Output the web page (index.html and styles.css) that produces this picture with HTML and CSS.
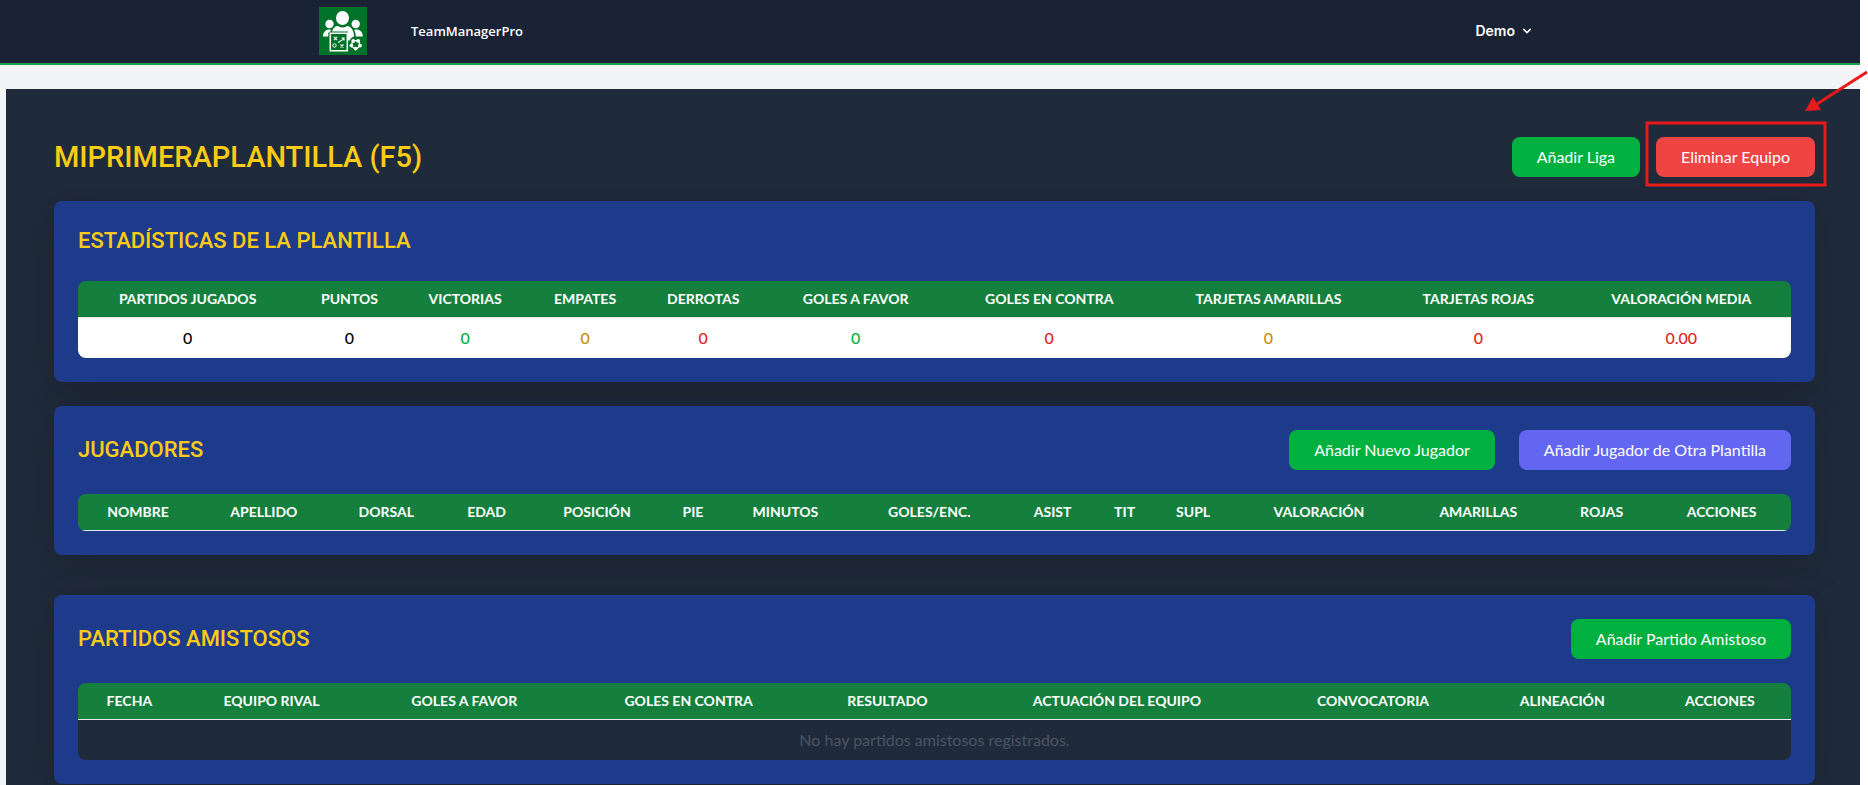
FILE: index.html
```html
<!DOCTYPE html>
<html lang="es">
<head>
<meta charset="utf-8">
<title>TeamManagerPro</title>
<link rel="stylesheet" href="styles.css">
</head>
<body>
<div class="page">
  <header class="nav">
    <div class="nav-inner">
      <a class="logo" href="#" aria-label="Inicio">
        <svg viewBox="0 0 48 48" width="48" height="48" aria-hidden="true">
          <rect width="48" height="48" fill="#007328"/>
          <g fill="#fff">
            <ellipse cx="23.500" cy="11" rx="6.500" ry="7"/>
            <circle cx="10.500" cy="17" r="4.200"/>
            <circle cx="36.700" cy="17" r="4.200"/>
            <path d="M4 29.500c0-4 2.500-7 6-7 1 0 1.700.2 2.300.5l-1.800 2.500H9.300v4z"/>
            <path d="M43.800 29.500c0-4-2.500-7-6-7-1.500 0-2.100.2-2.700.6 1.200 2 1.700 4 1.700 6.400z"/>
            <path d="M13 24.500c1-3.500 3-5.500 6-5.500 3 2 6 2 9 0 4 .3 7 4 7 10.500-2 .6-3.500 2-4.300 4H29V24.500z"/>
          </g>
          <path d="M11.300 26.300h17v17.500h-17z" fill="#007328" stroke="#fff" stroke-width="1.500"/>
          <path d="M15 30l3 3M18 30l-3 3M21.500 37.500l3 3M24.500 37.500l-3 3M19.500 36c0-3 4.500-1 5-5M22.500 31h2.500v2.500" fill="none" stroke="#fff" stroke-width="1.100"/>
          <circle cx="15.500" cy="38.500" r="1.700" fill="none" stroke="#fff"/>
          <circle cx="36.700" cy="37.500" r="3.900" fill="none" stroke="#fff" stroke-width="1.400"/>
          <g fill="#fff">
            <circle cx="34.200" cy="33.900" r="1.900"/>
            <circle cx="39.200" cy="33.900" r="1.900"/>
            <circle cx="41" cy="38.600" r="1.900"/>
            <circle cx="36.700" cy="41.600" r="1.900"/>
            <circle cx="32.400" cy="38.600" r="1.900"/>
          </g>
        </svg>
      </a>
      <a class="brand" href="#">TeamManagerPro</a>
      <button class="user" type="button">Demo
        <svg viewBox="0 0 20 20" width="16" height="16" fill="currentColor" aria-hidden="true"><path fill-rule="evenodd" d="M5.293 7.293a1 1 0 011.414 0L10 10.586l3.293-3.293a1 1 0 111.414 1.414l-4 4a1 1 0 01-1.414 0l-4-4a1 1 0 010-1.414z"/></svg>
      </button>
    </div>
  </header>

  <main class="main">
    <div class="head">
      <h1 class="title">MIPRIMERAPLANTILLA (F5)</h1>
      <div class="actions">
        <button class="btn" type="button">Añadir Liga</button>
        <div class="marked">
          <button class="btn btn-red" type="button">Eliminar Equipo</button>
          <svg class="mark" viewBox="0 0 223 120" width="223" height="120" aria-hidden="true">
            <rect x="2" y="55" width="178" height="62" fill="none" stroke="#e81a1a" stroke-width="3"/>
            <path d="M222 4L172 36" stroke="#e81a1a" stroke-width="3"/>
            <path d="M160 43l8-14 8 13z" fill="#e81a1a"/>
          </svg>
        </div>
      </div>
    </div>

    <section class="card">
      <div class="card-head"><h2 class="subtitle">ESTADÍSTICAS DE LA PLANTILLA</h2></div>
      <div class="frame">
        <table class="table stats">
          <thead><tr><th>PARTIDOS JUGADOS</th><th>PUNTOS</th><th>VICTORIAS</th><th>EMPATES</th><th>DERROTAS</th><th>GOLES A FAVOR</th><th>GOLES EN CONTRA</th><th>TARJETAS AMARILLAS</th><th>TARJETAS ROJAS</th><th>VALORACIÓN MEDIA</th></tr></thead>
          <tbody><tr><td>0</td><td>0</td><td class="good">0</td><td class="warn">0</td><td class="bad">0</td><td class="good">0</td><td class="bad">0</td><td class="warn">0</td><td class="bad">0</td><td class="bad">0.00</td></tr></tbody>
        </table>
      </div>
    </section>

    <section class="card card-spaced">
      <div class="card-head">
        <h2 class="subtitle">JUGADORES</h2>
        <div class="actions actions-wide">
          <button class="btn" type="button">Añadir Nuevo Jugador</button>
          <button class="btn btn-indigo" type="button">Añadir Jugador de Otra Plantilla</button>
        </div>
      </div>
      <div class="frame">
        <table class="table players">
          <thead><tr><th>NOMBRE</th><th>APELLIDO</th><th>DORSAL</th><th>EDAD</th><th>POSICIÓN</th><th>PIE</th><th>MINUTOS</th><th>GOLES/ENC.</th><th>ASIST</th><th>TIT</th><th>SUPL</th><th>VALORACIÓN</th><th>AMARILLAS</th><th>ROJAS</th><th>ACCIONES</th></tr></thead>
        </table>
      </div>
    </section>

    <section class="card">
      <div class="card-head">
        <h2 class="subtitle">PARTIDOS AMISTOSOS</h2>
        <button class="btn" type="button">Añadir Partido Amistoso</button>
      </div>
      <div class="frame">
        <table class="table matches">
          <thead><tr><th>FECHA</th><th>EQUIPO RIVAL</th><th>GOLES A FAVOR</th><th>GOLES EN CONTRA</th><th>RESULTADO</th><th>ACTUACIÓN DEL EQUIPO</th><th>CONVOCATORIA</th><th>ALINEACIÓN</th><th>ACCIONES</th></tr></thead>
          <tbody><tr><td class="empty" colspan="9">No hay partidos amistosos registrados.</td></tr></tbody>
        </table>
      </div>
    </section>
  </main>
</div>
</body>
</html>
```
FILE: styles.css
```css
*, *::before, *::after { box-sizing: border-box; }

body {
  margin: 0;
  background: #fff;
  font-family: Lato, "Liberation Sans", sans-serif;
  font-size: 16px;
  line-height: 24px;
}

h1, h2 { margin: 0; }

.page {
  display: flex;
  flex-direction: column;
  min-height: 100vh;
  margin-right: 8px;
  background: #f3f4f6;
}

.nav {
  background: #1a2236;
  border-bottom: 2px solid #16a34a;
  color: #fff;
}

.nav-inner {
  display: flex;
  align-items: center;
  max-width: 1222px;
  height: 63px;
  margin: 0 auto;
  padding-bottom: 1px;
}

.logo { display: flex; }

.brand {
  margin-left: 44px;
  color: #fff;
  font: 600 13px/20px "Open Sans", sans-serif;
  text-decoration: none;
}

.user {
  display: flex;
  align-items: center;
  gap: 4px;
  margin-left: auto;
  padding: 8px 6px;
  border: 0;
  background: none;
  color: #fff;
  font: 600 14px/20px Inter, sans-serif;
}

.main {
  flex: 1;
  margin: 24px 0 0 6px;
  padding: 48px 45px 0 48px;
  background: #1f2a3a;
}

.head {
  display: flex;
  align-items: center;
  justify-content: space-between;
  margin-bottom: 24px;
}

.title {
  color: #facc15;
  font: 500 29px/40px Roboto, sans-serif;
}

.subtitle {
  color: #facc15;
  font: 500 22px/32px Roboto, sans-serif;
}

.actions {
  display: flex;
  gap: 16px;
}

.actions-wide { gap: 24px; }

.btn {
  padding: 8px 25px;
  border: 0;
  border-radius: 8px;
  background: #00b140;
  color: #fff;
  font: inherit;
}

.btn-red { background: #ef4444; }
.btn-indigo { background: #6366f1; }

.marked { position: relative; }

.mark {
  position: absolute;
  top: -69px;
  right: -53px;
  pointer-events: none;
}

.card {
  margin-bottom: 24px;
  padding: 24px;
  border-radius: 8px;
  background: #1e3a8a;
  box-shadow: 0 8px 40px rgba(0, 0, 0, 0.16);
}

.card-spaced { margin-bottom: 40px; }
.card:last-child { margin-bottom: 1px; }

.card-head {
  display: flex;
  align-items: center;
  justify-content: space-between;
  margin-bottom: 24px;
}

.frame {
  overflow: hidden;
  border-radius: 8px;
}

.table {
  width: 100%;
  border-collapse: separate;
  border-spacing: 0;
  table-layout: fixed;
  text-align: center;
}

.table th {
  padding: 8px 0;
  border-bottom: 1px solid #e5e7eb;
  background: #15803d;
  color: #fff;
  font-size: 14px;
  font-weight: 700;
  line-height: 20px;
  white-space: nowrap;
}

.table td {
  padding: 8px;
  background: #fff;
  color: #000;
  font-weight: 500;
}

.table .good { color: #00b140; }
.table .warn { color: #ca8a04; }
.table .bad { color: #dc2626; }

.table .empty {
  background: #1f2a3a;
  color: #4b5563;
  font-weight: 400;
}

.stats th:nth-child(1) { width: 12.8%; }
.stats th:nth-child(2) { width: 6.1%; }
.stats th:nth-child(3) { width: 7.4%; }
.stats th:nth-child(4) { width: 6.6%; }
.stats th:nth-child(5) { width: 7.2%; }
.stats th:nth-child(6) { width: 10.6%; }
.stats th:nth-child(7) { width: 12%; }
.stats th:nth-child(8) { width: 13.6%; }
.stats th:nth-child(9) { width: 10.9%; }
.stats th:nth-child(10) { width: 12.8%; }

.players th:nth-child(1) { width: 7%; }
.players th:nth-child(2) { width: 7.7%; }
.players th:nth-child(3) { width: 6.6%; }
.players th:nth-child(4) { width: 5.1%; }
.players th:nth-child(5) { width: 7.8%; }
.players th:nth-child(6) { width: 3.4%; }
.players th:nth-child(7) { width: 7.4%; }
.players th:nth-child(8) { width: 9.4%; }
.players th:nth-child(9) { width: 5%; }
.players th:nth-child(10) { width: 3.4%; }
.players th:nth-child(11) { width: 4.6%; }
.players th:nth-child(12) { width: 10.1%; }
.players th:nth-child(13) { width: 8.5%; }
.players th:nth-child(14) { width: 5.9%; }
.players th:nth-child(15) { width: 8.1%; }

.matches th:nth-child(1) { width: 6%; }
.matches th:nth-child(2) { width: 10.6%; }
.matches th:nth-child(3) { width: 11.9%; }
.matches th:nth-child(4) { width: 14.3%; }
.matches th:nth-child(5) { width: 8.9%; }
.matches th:nth-child(6) { width: 17.9%; }
.matches th:nth-child(7) { width: 12%; }
.matches th:nth-child(8) { width: 10.1%; }
.matches th:nth-child(9) { width: 8.3%; }
```
